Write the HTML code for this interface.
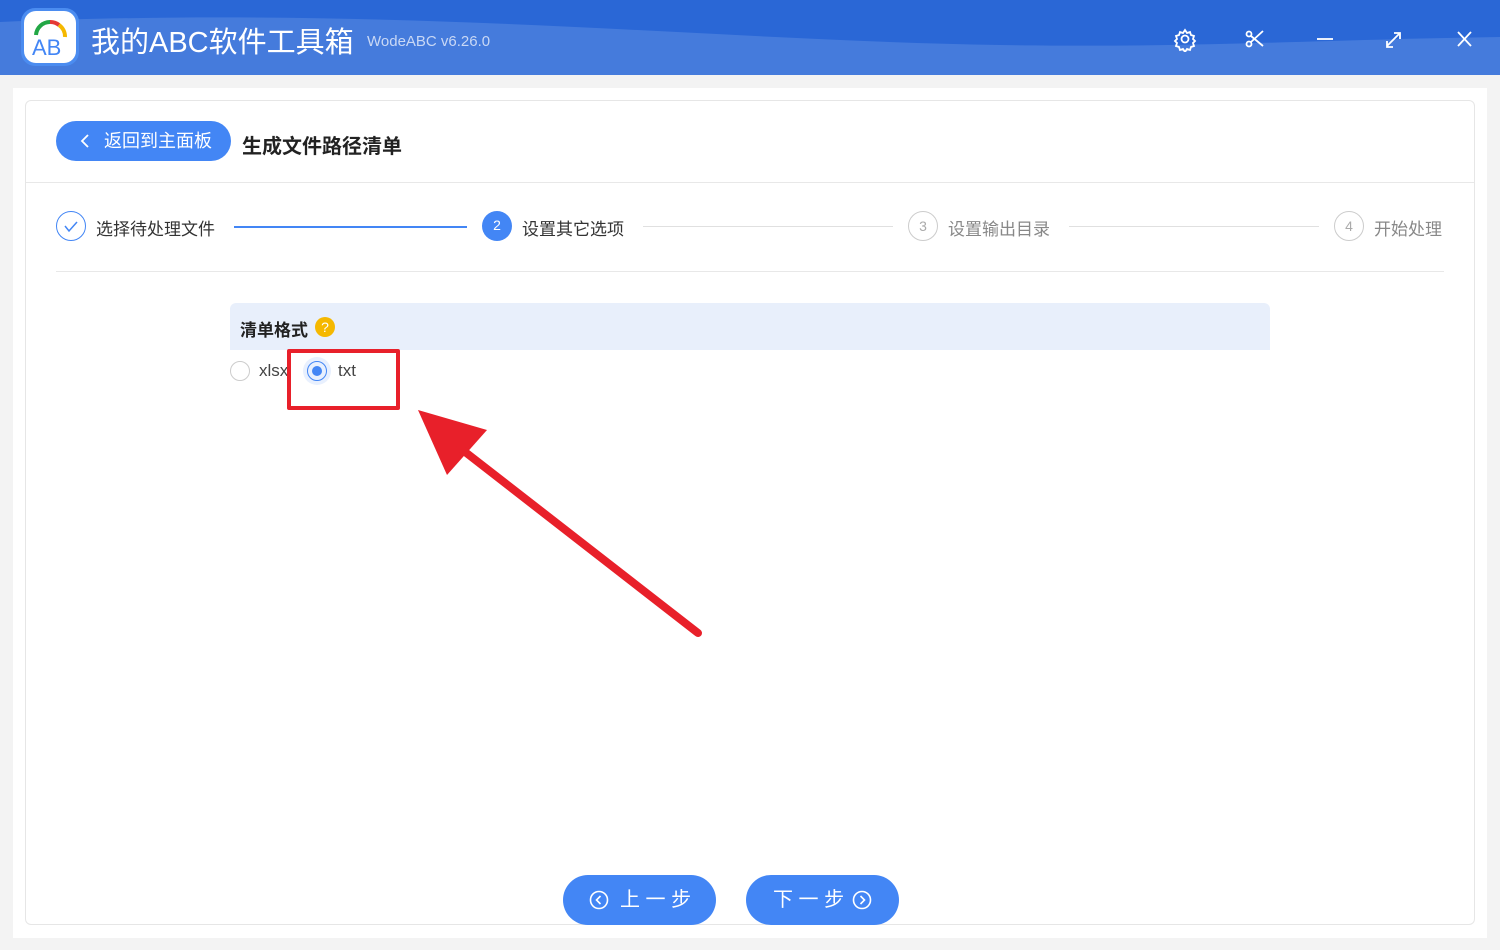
<!DOCTYPE html>
<html><head><meta charset="utf-8"><style>
*{margin:0;padding:0;box-sizing:border-box}
body{width:1500px;height:950px;background:#f3f3f3;font-family:"Liberation Sans","Noto Sans CJK SC",sans-serif;position:relative;overflow:hidden}
.top{position:absolute;left:0;top:0;width:1500px;height:75px;background:#457bdc;overflow:hidden}
.logo{position:absolute;left:21px;top:8px;width:58px;height:58px;border-radius:14px;background:#4b8cf0;padding:3px}
.logo div{width:52px;height:52px;background:#fff;border-radius:12px}
.ttl{position:absolute;left:91px;top:19px;color:#fff;font-size:29px}
.ver{position:absolute;left:367px;top:33px;color:#c9d8f5;font-size:15px}
.card{position:absolute;left:13px;top:88px;width:1474px;height:850px;background:#fff;}
.inner{position:absolute;left:25px;top:100px;width:1450px;height:825px;border:1px solid #e6e6e6;border-radius:6px;background:#fff}
.back{position:absolute;left:56px;top:121px;width:175px;height:40px;border-radius:20px;background:#4386f5;color:#fff;font-size:18px;line-height:40px;padding-left:48px}
.h{position:absolute;left:242px;top:130px;font-size:20px;font-weight:bold;color:#222}
.hr{position:absolute;height:1px;background:#e8e8e8}
.step{position:absolute;top:211px;width:30px;height:30px;border-radius:50%;text-align:center;line-height:28px;font-size:14px}
.sl{position:absolute;top:215px;font-size:17px}
.ln{position:absolute;top:226px;height:2px}
.btn{position:absolute;top:875px;width:153px;height:50px;border-radius:25px;background:#4386f5;color:#fff;font-size:20px;line-height:50px}
</style></head><body>
<div class="top">
<svg style="position:absolute;left:0;top:0" width="1500" height="75"><path d="M0 0 H1500 V37 C1300 40 1200 48 1000 45 C700 40 400 5 0 22 Z" fill="#2a67d6"/></svg>
<div class="logo"><div><svg width="52" height="52" viewBox="0 0 52 52"><path d="M12 24 A14 14 0 0 1 26 11" stroke="#22a745" stroke-width="4" fill="none"/><path d="M26 11 A14 14 0 0 1 35 14" stroke="#e53935" stroke-width="4" fill="none"/><path d="M35 14 A14 14 0 0 1 41 26" stroke="#f5b800" stroke-width="4" fill="none"/><text x="8" y="44" font-size="22" fill="#4386f5" font-family="Liberation Sans">AB</text></svg></div></div>
<div class="ttl">我的ABC软件工具箱</div>
<div class="ver">WodeABC v6.26.0</div>
<svg style="position:absolute;left:1170px;top:26px" width="310" height="26" viewBox="0 0 310 26" fill="none" stroke="#fff" stroke-width="1.8">
<circle cx="15" cy="13" r="3.5"/><path d="M15 4 l2 3 3-1 1 3 3 1-1 3 2 2-2 2 1 3-3 1-1 3-3-1-2 3-2-3-3 1-1-3-3-1 1-3-2-2 2-2-1-3 3-1 1-3 3 1z"/>
<circle cx="79" cy="8" r="2.5"/><circle cx="79" cy="18" r="2.5"/><path d="M81 16 L93 5 M81 10 L93 20"/>
<path d="M147 13 H163"/>
<path d="M217 20 L229 8 M224 7 h6 v6 M217 15 v6 h6"/>
<path d="M288 6 L301 20 M301 6 L288 20"/>
</svg>
</div>
<div class="card"></div>
<div class="inner"></div>
<div class="back"><svg style="position:absolute;left:24px;top:13px" width="10" height="14"><path d="M8 1 L2 7 L8 13" stroke="#fff" stroke-width="1.8" fill="none"/></svg>返回到主面板</div>
<div class="h">生成文件路径清单</div>
<div class="hr" style="left:26px;top:182px;width:1448px"></div>
<div class="step" style="left:56px;border:1px solid #4386f5"><svg width="28" height="28"><path d="M8 14 l4 5 8-9" stroke="#4386f5" stroke-width="1.5" fill="none"/></svg></div>
<div class="sl" style="left:96px;color:#333">选择待处理文件</div>
<div class="ln" style="left:234px;width:233px;background:#4386f5"></div>
<div class="step" style="left:482px;background:#4386f5;color:#fff">2</div>
<div class="sl" style="left:522px;color:#333">设置其它选项</div>
<div class="ln" style="left:643px;width:250px;height:1px;background:#e0e0e0"></div>
<div class="step" style="left:908px;border:1px solid #ccc;color:#aaa">3</div>
<div class="sl" style="left:948px;color:#888">设置输出目录</div>
<div class="ln" style="left:1069px;width:250px;height:1px;background:#e0e0e0"></div>
<div class="step" style="left:1334px;border:1px solid #ccc;color:#aaa">4</div>
<div class="sl" style="left:1374px;color:#888">开始处理</div>
<div class="hr" style="left:56px;top:271px;width:1388px"></div>
<div style="position:absolute;left:230px;top:303px;width:1040px;height:47px;background:#e8effb;border-radius:6px 6px 0 0"></div>
<div style="position:absolute;left:240px;top:316px;font-size:17px;font-weight:bold;color:#222">清单格式</div>
<div style="position:absolute;left:315px;top:317px;width:20px;height:20px;border-radius:50%;background:#f5b800;color:#fff;font-size:14px;text-align:center;line-height:20px">?</div>
<div style="position:absolute;left:230px;top:361px;width:20px;height:20px;border-radius:50%;border:1px solid #ccc"></div>
<div style="position:absolute;left:259px;top:361px;font-size:17px;color:#444">xlsx</div>
<div style="position:absolute;left:303px;top:357px;width:28px;height:28px;border-radius:50%;background:#e8f0fe"></div>
<div style="position:absolute;left:307px;top:361px;width:20px;height:20px;border-radius:50%;border:1.5px solid #4386f5"></div>
<div style="position:absolute;left:312px;top:366px;width:10px;height:10px;border-radius:50%;background:#4386f5"></div>
<div style="position:absolute;left:338px;top:361px;font-size:17px;color:#444">txt</div>
<div style="position:absolute;left:287px;top:349px;width:113px;height:61px;border:4px solid #e8202a;border-radius:2px"></div>
<svg style="position:absolute;left:0;top:0" width="1500" height="950"><polygon points="418,410 487,430 447,475" fill="#e8202a"/><path d="M460 448 L698 633" stroke="#e8202a" stroke-width="8" stroke-linecap="round"/></svg>
<div class="btn" style="left:563px;padding-left:57px">上 一 步<svg style="position:absolute;left:26px;top:15px" width="20" height="20"><circle cx="10" cy="10" r="8.5" stroke="#fff" stroke-width="1.6" fill="none"/><path d="M11.5 6 L7.5 10 L11.5 14" stroke="#fff" stroke-width="1.6" fill="none"/></svg></div>
<div class="btn" style="left:746px;padding-left:27px">下 一 步<svg style="position:absolute;left:106px;top:15px" width="20" height="20"><circle cx="10" cy="10" r="8.5" stroke="#fff" stroke-width="1.6" fill="none"/><path d="M8.5 6 L12.5 10 L8.5 14" stroke="#fff" stroke-width="1.6" fill="none"/></svg></div>
</body></html>
